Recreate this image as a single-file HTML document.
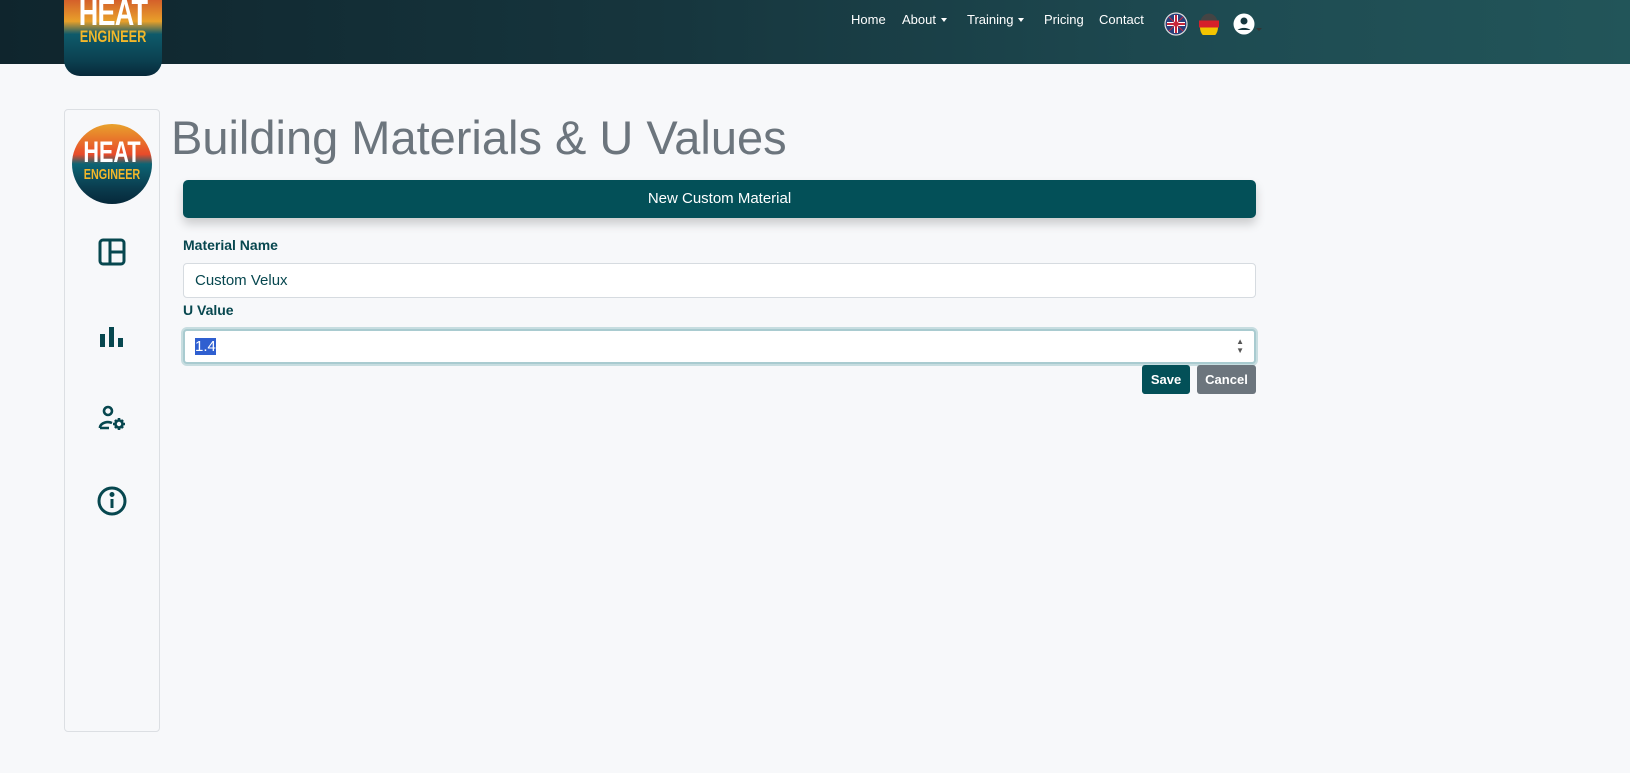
<!DOCTYPE html>
<html><head><meta charset="utf-8"><style>
*{box-sizing:border-box;margin:0;padding:0}
body{width:1630px;height:773px;background:#f7f8fa;font-family:"Liberation Sans",sans-serif;position:relative;overflow:hidden}
.nav{position:absolute;left:0;top:0;width:1630px;height:64px;background:linear-gradient(90deg,#0f252d 0%,#16353d 40%,#1e4b52 75%,#225559 100%)}
.logo{position:absolute;left:64px;top:0;width:98px;height:76px;border-radius:0 0 16px 16px;overflow:hidden;background:linear-gradient(180deg,#d4602a 0%,#e8a02a 28%,#0e5a6a 45%,#0b4050 80%,#07293a 100%);text-align:center;color:#fff;font-weight:bold}
.logo .h{font-size:36px;line-height:30px;letter-spacing:-1px;transform:scaleX(.75);display:block}
.logo .e{font-size:17px;color:#f2b72a;transform:scaleX(.75);display:block;line-height:18px}
.menu a{position:absolute;top:12px;color:#fff;font-size:13px;text-decoration:none}
.caret{display:inline-block;border-left:3px solid transparent;border-right:3px solid transparent;border-top:4px solid #fff;margin-left:5px;vertical-align:2px}
.side{position:absolute;left:64px;top:109px;width:96px;height:623px;border:1px solid #dcdfe3;border-radius:4px;background:#f7f8fa}
.circ{position:absolute;left:72px;top:124px;width:80px;height:80px;border-radius:50%;background:linear-gradient(180deg,#e8a22c 0%,#e84a2a 38%,#0d6474 50%,#0a3c4e 80%,#06283a 100%);text-align:center;color:#fff;font-weight:bold;padding-top:16px}
.ic{position:absolute;left:96px;width:32px;height:32px}
h1{position:absolute;left:171px;top:110px;font-size:47px;font-weight:normal;color:#6c757d}
.bar{position:absolute;left:183px;top:180px;width:1073px;height:38px;background:#035058;border-radius:5px;color:#fff;font-size:15px;text-align:center;line-height:38px;box-shadow:0 6px 10px rgba(0,0,0,.18)}
.lbl{position:absolute;left:183px;font-size:14px;font-weight:bold;color:#07474f}
.inp{position:absolute;left:183px;width:1073px;height:35px;background:#fff;border:1px solid #d6dbe0;border-radius:4px;font-size:15px;color:#07474f;padding:8px 11px}
.btn{position:absolute;top:365px;height:29px;border-radius:3px;color:#fff;font-size:13px;font-weight:bold;line-height:29px;text-align:center}
</style></head><body>
<div class="nav">
<div class="menu">
<a style="left:851px">Home</a>
<a style="left:902px">About<span class="caret"></span></a>
<a style="left:967px">Training<span class="caret"></span></a>
<a style="left:1044px">Pricing</a>
<a style="left:1099px">Contact</a>
</div>
<svg style="position:absolute;left:1164px;top:12px" width="24" height="24" viewBox="0 0 24 24"><circle cx="12" cy="12" r="11" fill="#2a3f7a" stroke="#ddd" stroke-width="1.2"/><path d="M3 12h18M12 3v18" stroke="#fff" stroke-width="4"/><path d="M3 12h18M12 3v18" stroke="#c8283a" stroke-width="2"/><path d="M5 5l14 14M19 5L5 19" stroke="#c8283a" stroke-width="1"/></svg>
<svg style="position:absolute;left:1199px;top:13px" width="20" height="22" viewBox="0 0 20 22"><ellipse cx="10" cy="11" rx="9" ry="10.5" fill="#444"/><rect x="0" y="7.5" width="20" height="7" fill="#d6202a"/><path d="M1 14.5h18A9 10.5 0 0 1 1 14.5z" fill="#f3c400"/></svg>
<svg style="position:absolute;left:1233px;top:12px" width="30" height="24" viewBox="0 0 30 24"><circle cx="11" cy="12" r="10.5" fill="#fff"/><circle cx="11" cy="9" r="3.5" fill="#17373f"/><path d="M4.5 18a8 5 0 0 1 13 0" fill="#17373f"/><path d="M23 16h6l-3 3z" fill="#333"/></svg>
</div>
<div class="logo"><span class="h" style="margin-top:-2px">HEAT</span><span class="e">ENGINEER</span></div>
<div class="side"></div>
<div class="circ"><span style="display:block;font-size:30px;line-height:26px;transform:scaleX(.72)">HEAT</span><span style="display:block;font-size:15px;color:#f2b72a;transform:scaleX(.72)">ENGINEER</span></div>
<svg class="ic" style="top:236px" viewBox="0 0 32 32" fill="none" stroke="#07474f" stroke-width="3"><rect x="4" y="4" width="24" height="24" rx="3"/><path d="M14 4v24M14 16h14"/></svg>
<svg class="ic" style="top:320px" viewBox="0 0 32 32" fill="#07474f"><rect x="4" y="14" width="5" height="13"/><rect x="13" y="7" width="5" height="20"/><rect x="22" y="18" width="5" height="9"/></svg>
<svg class="ic" style="top:403px" viewBox="0 0 32 32" fill="none" stroke="#07474f" stroke-width="2.6"><circle cx="12" cy="8" r="4"/><path d="M4 25v-1a8 6 0 0 1 12-4M4 25h9"/><circle cx="23" cy="21" r="3.5"/><path d="M23 15v2.5M23 24.5v2.5M17 21h2.5M26.5 21h2.5M19 17l1.5 1.5M25.5 23.5l1.5 1.5M27 17l-1.5 1.5M20.5 23.5L19 25"/></svg>
<svg class="ic" style="top:485px" viewBox="0 0 32 32" fill="none" stroke="#07474f" stroke-width="3"><circle cx="16" cy="16" r="13"/><path d="M16 14v9"/><circle cx="16" cy="9.5" r="1" fill="#07474f"/></svg>
<h1>Building Materials &amp; U Values</h1>
<div class="bar">New Custom Material</div>
<div class="lbl" style="top:237px">Material Name</div>
<div class="inp" style="top:263px">Custom Velux</div>
<div class="lbl" style="top:302px">U Value</div>
<div class="inp" style="top:329px;border:2px solid #a9cbd0;box-shadow:0 0 0 2px #c7dde0;padding:7px 10px"><span style="background:#2f5fd0;color:#fff">1.4</span><span style="position:absolute;right:10px;top:6px;font-size:8px;color:#555;line-height:9px">▲<br>▼</span></div>
<div class="btn" style="left:1142px;width:48px;background:#035058">Save</div>
<div class="btn" style="left:1197px;width:59px;background:#6c757d">Cancel</div>
</body></html>
